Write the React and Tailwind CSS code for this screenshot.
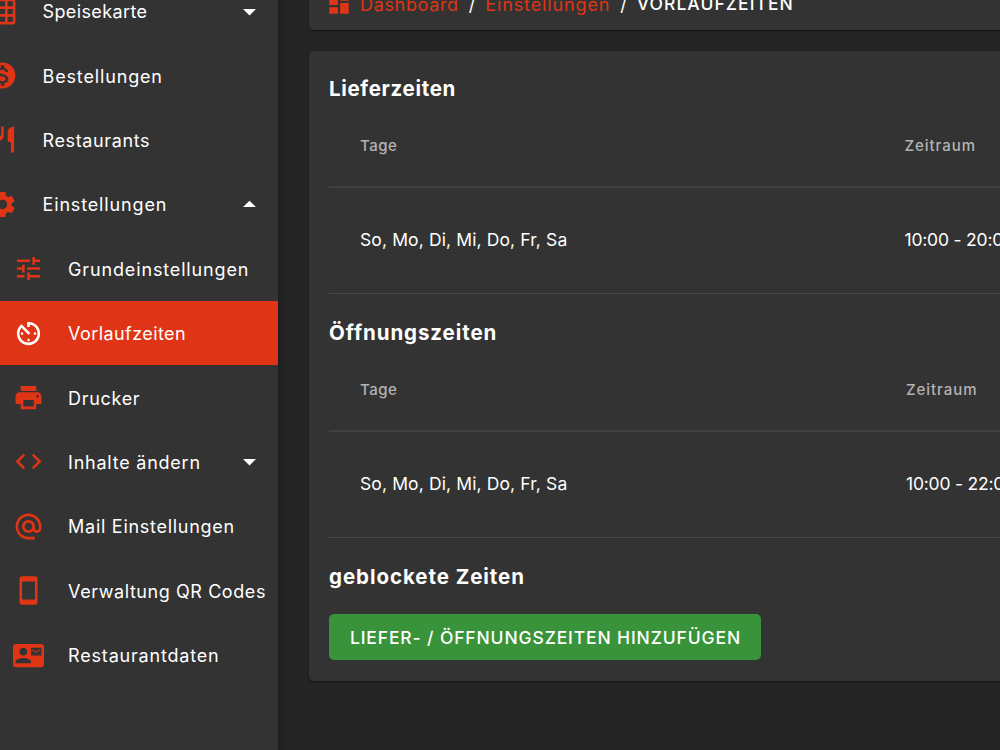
import React from 'react';
import clsx from 'clsx';
import {
  MdAlternateEmail,
  MdArrowDropDown,
  MdArrowDropUp,
  MdAvTimer,
  MdCode,
  MdContactMail,
  MdDashboard,
  MdGridOn,
  MdMonetizationOn,
  MdPrint,
  MdRestaurant,
  MdSettings,
  MdStayCurrentPortrait,
  MdTune,
} from 'react-icons/md';

const menu = [
  { label: 'Speisekarte', icon: MdGridOn, arrow: 'down', tracking: 'tracking-[0.38px]' },
  { label: 'Bestellungen', icon: MdMonetizationOn, tracking: 'tracking-[0.85px]' },
  { label: 'Restaurants', icon: MdRestaurant, tracking: 'tracking-[0.63px]' },
  { label: 'Einstellungen', icon: MdSettings, arrow: 'up', tracking: 'tracking-[0.85px]' },
  { label: 'Grundeinstellungen', icon: MdTune, child: true, tracking: 'tracking-[0.85px]' },
  { label: 'Vorlaufzeiten', icon: MdAvTimer, child: true, active: true, tracking: 'tracking-[0.42px]' },
  { label: 'Drucker', icon: MdPrint, child: true, tracking: 'tracking-[0.68px]' },
  { label: 'Inhalte ändern', icon: MdCode, child: true, arrow: 'down', tracking: 'tracking-[0.76px]' },
  { label: 'Mail Einstellungen', icon: MdAlternateEmail, child: true, tracking: 'tracking-[0.72px]' },
  { label: 'Verwaltung QR Codes', icon: MdStayCurrentPortrait, child: true, tracking: 'tracking-[0.57px]' },
  { label: 'Restaurantdaten', icon: MdContactMail, child: true, tracking: 'tracking-[0.81px]' },
];

const sections = [
  { title: 'Lieferzeiten', tracking: 'tracking-[0.66px]', days: 'So, Mo, Di, Mi, Do, Fr, Sa', time: '10:00 - 20:00', timeCol: 'w-[575.5px]' },
  { title: 'Öffnungszeiten', tracking: 'tracking-[0.92px]', days: 'So, Mo, Di, Mi, Do, Fr, Sa', time: '10:00 - 22:00', timeCol: 'w-[577px]' },
];

const MenuItem = ({ item }) => {
  const Icon = item.icon;
  const Arrow = item.arrow === 'up' ? MdArrowDropUp : MdArrowDropDown;

  return (
    <li
      className={clsx(
        'flex h-[64.4px] shrink-0 items-center pr-[13px]',
        item.child ? 'pl-[12.6px]' : '-ml-[13px]',
        item.active && 'bg-[#df3415]'
      )}
    >
      <Icon className={clsx('size-[31px] shrink-0', item.active ? 'text-white' : 'text-[#df3415]')} />
      <span className={clsx('ml-[24.5px] grow pt-px text-[18px] whitespace-nowrap text-white', item.tracking)}>{item.label}</span>
      {item.arrow && <Arrow className="size-[31px] shrink-0 text-white" />}
    </li>
  );
};

const TimeTable = ({ section }) => (
  <section>
    <h2 className={clsx('h-[55px] pt-[25px] text-[20.5px] leading-7 font-bold', section.tracking)}>{section.title}</h2>
    <div className="flex h-[83px] items-center border-b-2 border-[#404040] pt-0.5 pl-[31px] text-[15px] font-medium text-[#b3b3b3]">
      <span className={clsx('-mr-[31px] shrink-0', section.timeCol)}>
        <span className="tracking-[0.5px]">Tage</span>
      </span>
      <span className="tracking-[0.95px]">Zeitraum</span>
    </div>
    <div className="flex h-[106px] items-center border-b border-[#484848] pl-[31px] text-[17.5px] whitespace-nowrap">
      <span className={clsx('-mr-[31px] shrink-0 tracking-[0.12px]', section.timeCol)}>{section.days}</span>
      <span className="tracking-[-0.2px]">{section.time}</span>
    </div>
  </section>
);

const App = () => {
  return (
    <div className="flex h-[750px] w-[1000px] overflow-hidden bg-[#242424] font-['Inter','Liberation_Sans',sans-serif] text-white">
      <aside className="z-10 w-[278px] shrink-0 bg-[#333333] shadow-[0_0_8px_rgba(0,0,0,0.35)]">
        <ul className="-mt-[21px] flex flex-col">
          {menu.map((item) => (
            <MenuItem key={item.label} item={item} />
          ))}
        </ul>
      </aside>

      <main className="flex w-[760px] shrink-0 flex-col gap-[21px] pl-[31px]">
        <nav className="-mt-[22px] flex h-[52px] shrink-0 items-center rounded-[5px] bg-[#333333] pl-[17px] text-[18px] whitespace-nowrap shadow-[0_1px_2px_rgba(0,0,0,0.5)]">
          <MdDashboard className="mr-[8px] size-[26px] text-[#df3415]" />
          <span className="tracking-[0.66px] text-[#df3415]">Dashboard</span>
          <span className="mx-[10px]">/</span>
          <span className="tracking-[0.87px] text-[#df3415]">Einstellungen</span>
          <span className="mx-[10px]">/</span>
          <span className="pt-px text-[17.5px] font-medium tracking-[1.04px]">VORLAUFZEITEN</span>
        </nav>

        <div className="h-[630px] shrink-0 rounded-[5px] bg-[#333333] pl-5 shadow-[0_1px_2px_rgba(0,0,0,0.5)]">
          <div className="-mt-px">
            {sections.map((section) => (
              <TimeTable key={section.title} section={section} />
            ))}
          </div>
          <h2 className="h-[55px] pt-[25px] text-[20.5px] leading-7 font-bold tracking-[0.94px]">geblockete Zeiten</h2>
          <button className="mt-[21px] h-[46px] w-[432px] rounded-[5px] bg-[#39933a] pt-0.5 pl-px text-[17.5px] font-medium tracking-[0.86px] whitespace-nowrap">
            LIEFER- / ÖFFNUNGSZEITEN HINZUFÜGEN
          </button>
        </div>
      </main>
    </div>
  );
};

export default App;
